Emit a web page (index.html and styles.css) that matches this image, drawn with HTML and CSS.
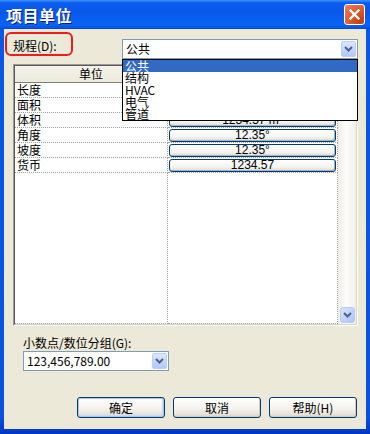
FILE: index.html
```html
<!DOCTYPE html>
<html lang="zh-CN">
<head>
    <meta charset="UTF-8">
    <meta name="viewport" content="width=device-width, initial-scale=1.0">
    <title>项目单位</title>
    <link rel="stylesheet" href="styles.css">
</head>
<body>
    <div class="window">
        <div class="titlebar">
            <span class="title">项目单位</span>
            <button class="close-btn">
                <svg width="11" height="11" viewBox="0 0 11 11"><path d="M1.5 1.5L9.5 9.5M9.5 1.5L1.5 9.5" stroke="#fff" stroke-width="2.3" stroke-linecap="square"/></svg>
            </button>
        </div>

        <div class="body">
            <div class="top-row">
                <div class="label-box">规程(D):</div>
                <div class="combo wide">
                    <span class="combo-text">公共</span>
                    <span class="combo-btn">
                        <svg width="9" height="6" viewBox="0 0 9 6"><path d="M1 1l3.5 3.5L8 1" fill="none" stroke="#4D6185" stroke-width="2"/></svg>
                    </span>
                </div>
            </div>

            <!-- units grid -->
            <div class="grid">
                <div class="grid-inner">
                    <div class="grid-main">
                        <div class="grid-head">
                            <div class="cell col-a">单位</div>
                            <div class="cell col-b">格式</div>
                        </div>
                        <div class="grid-row">
                            <div class="cell col-a">长度</div>
                            <div class="cell col-b"><div class="value-btn">1234.57 m</div></div>
                        </div>
                        <div class="grid-row">
                            <div class="cell col-a">面积</div>
                            <div class="cell col-b"><div class="value-btn">1234.57 m²</div></div>
                        </div>
                        <div class="grid-row">
                            <div class="cell col-a">体积</div>
                            <div class="cell col-b"><div class="value-btn">1234.57 m³</div></div>
                        </div>
                        <div class="grid-row">
                            <div class="cell col-a">角度</div>
                            <div class="cell col-b"><div class="value-btn">12.35°</div></div>
                        </div>
                        <div class="grid-row">
                            <div class="cell col-a">坡度</div>
                            <div class="cell col-b"><div class="value-btn">12.35°</div></div>
                        </div>
                        <div class="grid-row">
                            <div class="cell col-a">货币</div>
                            <div class="cell col-b"><div class="value-btn">1234.57</div></div>
                        </div>
                        <div class="grid-fill">
                            <div class="cell col-a"></div>
                            <div class="cell col-b"></div>
                        </div>
                    </div>
                    <div class="scrollbar">
                        <span class="scroll-btn up">
                            <svg width="9" height="6" viewBox="0 0 9 6"><path d="M1 5l3.5-3.5L8 5" fill="none" stroke="#4D6185" stroke-width="2"/></svg>
                        </span>
                        <span class="scroll-btn">
                            <svg width="9" height="6" viewBox="0 0 9 6"><path d="M1 1l3.5 3.5L8 1" fill="none" stroke="#4D6185" stroke-width="2"/></svg>
                        </span>
                    </div>
                </div>
            </div>

            <div class="field-label">小数点/数位分组(G):</div>
            <div class="combo small">
                <span class="combo-text">123,456,789.00</span>
                <span class="combo-btn">
                    <svg width="9" height="6" viewBox="0 0 9 6"><path d="M1 1l3.5 3.5L8 1" fill="none" stroke="#4D6185" stroke-width="2"/></svg>
                </span>
            </div>

            <div class="actions">
                <button class="btn default">确定</button>
                <button class="btn">取消</button>
                <button class="btn">帮助(H)</button>
            </div>

            <!-- open list of the discipline combo -->
            <ul class="dropdown">
                <li class="selected">公共</li>
                <li>结构</li>
                <li>HVAC</li>
                <li>电气</li>
                <li>管道</li>
            </ul>
        </div>
    </div>
</body>
</html>
```

FILE: styles.css
```css
* {
    box-sizing: border-box;
}

body {
    margin: 0;
    font-family: "Noto Sans CJK SC", "Liberation Sans", sans-serif;
    font-size: 12px;
    color: #000;
}

.window {
    width: 370px;
    height: 434px;
    display: flex;
    flex-direction: column;
    background: linear-gradient(#0A58E6, #0A52DE 96%, #0036C4);
}

.titlebar {
    height: 29px;
    flex: none;
    display: flex;
    align-items: center;
    justify-content: space-between;
    padding: 0 5px 0 6px;
    background: linear-gradient(180deg, #3D95FF, #0A5DEE 10%, #0858EA 40%, #0A63F5 85%, #0656E8 95%, #0045D4);
}

.title {
    color: #fff;
    font-weight: bold;
    font-size: 16px;
    line-height: 18px;
    letter-spacing: 0.5px;
    text-shadow: 1px 1px #0A1E8C;
}

.close-btn {
    width: 21px;
    height: 21px;
    padding: 0;
    display: flex;
    align-items: center;
    justify-content: center;
    border: 1px solid #fff;
    border-radius: 3px;
    background: radial-gradient(circle at 85% 85%, #C23F14 0%, #DC5A2C 50%, #EB8563 100%);
}

.body {
    flex: 1;
    margin: 0 4px 5px;
    background: #ECE9D8;
    position: relative;
}

.top-row {
    display: flex;
    align-items: flex-start;
    padding: 3px 0 0 1px;
}

.label-box {
    width: 68px;
    height: 24px;
    border: 2px solid #EE1C1C;
    border-radius: 6px;
    padding: 4px 0 0 6px;
    line-height: 16px;
}

.combo {
    display: flex;
    height: 20px;
    background: #fff;
    border: 1px solid #7F9DB9;
}

.combo.wide {
    width: 236px;
    margin: 7px 0 0 49px;
}

.combo.small {
    width: 146px;
    margin: 1px 0 0 19px;
}

.combo-text {
    flex: 1;
    padding-left: 3px;
    line-height: 18px;
}

.combo-btn {
    width: 15px;
    height: 16px;
    margin: 1px;
    display: flex;
    align-items: center;
    justify-content: center;
    border: 1px solid #BCCEF8;
    border-radius: 2px;
    background: linear-gradient(#DCE6FD, #C1D3FB 60%, #B2C7F7);
}

/* grid */
.grid {
    margin: 5px 0 0 9px;
    width: 345px;
    height: 262px;
    border: 1px solid;
    border-color: #9A9A9A #FFFFFF #FFFFFF #9A9A9A;
}

.grid-inner {
    height: 100%;
    display: flex;
    background: #fff;
    border: 1px solid;
    border-color: #5A5A5A #D8D4C8 #D8D4C8 #5A5A5A;
}

.grid-main {
    width: 323px;
    display: flex;
    flex-direction: column;
}

.grid-head,
.grid-row,
.grid-fill {
    display: flex;
}

.grid-fill {
    flex: 1;
}

.col-a {
    width: 153px;
    border-right: 1px dotted #A0A0A0;
}

.col-b {
    width: 170px;
    border-right: 1px dotted #A0A0A0;
}

.grid-head .cell {
    height: 17px;
    line-height: 16px;
    text-align: center;
    background: linear-gradient(#F4F3EC, #EBEADB);
    border-bottom: 1px solid #7E7E74;
}

.grid-row .cell {
    height: 15px;
    line-height: 14px;
    border-bottom: 1px dotted #A0A0A0;
}

.grid-row .col-a {
    padding-left: 2px;
}

.grid-fill .cell {
    border-bottom: 1px dotted #A0A0A0;
}

.value-btn {
    height: 13px;
    margin: 1px 1px 0 1px;
    border: 1px solid #003C74;
    border-radius: 3px;
    background: linear-gradient(#FFFFFF, #F4F3EE 65%, #DCD8CB);
    box-shadow: inset -1px -1px #9EB4CC;
    font-family: "Liberation Sans", sans-serif;
    font-size: 12px;
    line-height: 11px;
    text-align: center;
}

.scrollbar {
    width: 18px;
    display: flex;
    flex-direction: column;
    justify-content: space-between;
    padding: 0 1px 1px 2px;
    background: linear-gradient(to right, #EEEDE5, #FDFDFA 45%, #F2F0E8);
}

.scroll-btn {
    width: 15px;
    height: 16px;
    display: flex;
    align-items: center;
    justify-content: center;
    border: 1px solid #B7CAF5;
    border-radius: 3px;
    background: linear-gradient(135deg, #D8E3FD, #BFD1FA 60%, #AFC4F5);
}

.field-label {
    margin: 10px 0 0 19px;
    line-height: 14px;
}

.actions {
    display: flex;
    justify-content: flex-end;
    gap: 8px;
    margin-top: 26px;
    padding-right: 9px;
}

.btn {
    width: 88px;
    height: 21px;
    padding: 0;
    font: inherit;
    line-height: 19px;
    color: #000;
    border: 1px solid #003C74;
    border-radius: 3px;
    background: linear-gradient(#FFFFFF, #F3F2EC 55%, #E6E3DA 85%, #D6D0C5);
    box-shadow: inset -1px -1px #D0CCC0;
}

.btn.default {
    box-shadow: inset 0 0 0 1px #A9C4F0, inset -2px -2px #C9DAF7;
}

.dropdown {
    position: absolute;
    left: 118px;
    top: 30px;
    width: 236px;
    height: 62px;
    margin: 0;
    padding: 0;
    list-style: none;
    background: #fff;
    border: 1px solid #000;
}

.dropdown li {
    height: 12px;
    line-height: 12px;
    padding-left: 2px;
}

.dropdown li.selected {
    background: #316AC5;
    color: #fff;
}
```
